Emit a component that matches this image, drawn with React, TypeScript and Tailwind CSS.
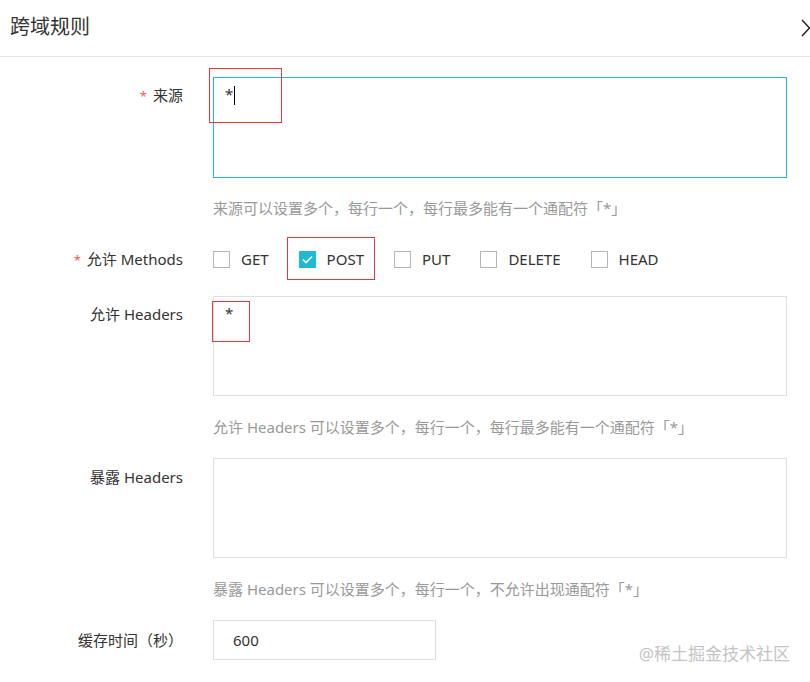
import React from "react";

const methods = [
  { name: "GET", checked: false },
  { name: "POST", checked: true },
  { name: "PUT", checked: false },
  { name: "DELETE", checked: false },
  { name: "HEAD", checked: false },
];

function Label({ text, required }: { text: string; required?: boolean }) {
  return (
    <div className="w-[183px] shrink-0 text-right leading-[20px] text-[#333]">
      {required && <span className="mr-[6px] text-[13px] text-[#f0595a]">*</span>}
      {text}
    </div>
  );
}

function Checkbox({ name, checked }: { name: string; checked: boolean }) {
  return (
    <label className="relative mr-[30px] flex items-center">
      {checked ? (
        <span className="flex h-[17px] w-[17px] items-center justify-center bg-[#1fb8d6]">
          <svg width="11" height="9" viewBox="0 0 11 9">
            <path d="M1 4.5 L4 7.5 L10 1.5" fill="none" stroke="#fff" strokeWidth="1.6" />
          </svg>
        </span>
      ) : (
        <span className="h-[17px] w-[17px] border border-[#b5b5b5] bg-white" />
      )}
      <span className="ml-[11px] text-[#333]">{name}</span>
      {checked && (
        <div className="absolute -left-[12px] -top-[11px] h-[43px] w-[88px] border border-[#e8363b]" />
      )}
    </label>
  );
}

export default function App() {
  return (
    <div className="relative h-[682px] w-[810px] overflow-hidden bg-white font-['Noto_Sans','Noto_Sans_CJK_SC',sans-serif] text-[15px]">
      {/* header */}
      <div className="flex h-[57px] items-center justify-between border-b border-[#e5e5e5] pb-[2px] pl-[10px]">
        <h1 className="text-[20px] text-[#333]">跨域规则</h1>
        <svg width="9" height="18" viewBox="0 0 9 18" className="mt-[1px]">
          <path d="M1 1 L8.5 9 L1 17" fill="none" stroke="#222" strokeWidth="1.5" />
        </svg>
      </div>

      <div className="pt-[20px]">
        {/* 来源 */}
        <div className="flex">
          <div className="pt-[8px]">
            <Label text="来源" required />
          </div>
          <div className="ml-[30px] w-[574px]">
            <div className="relative h-[101px] border border-[#1fb8d6] px-[11px] pt-[6px] leading-[20px] text-[#333]">
              <span>*</span>
              <span className="ml-[1px] inline-block h-[19px] w-px bg-black align-middle" />
              <div className="absolute -left-[5px] -top-[10px] h-[55px] w-[73px] border border-[#e8363b]" />
            </div>
            <p className="mt-[20px] leading-[20px] text-[#999]">
              来源可以设置多个，每行一个，每行最多能有一个通配符「*」
            </p>
          </div>
        </div>

        {/* Methods */}
        <div className="mt-[29px] flex h-[24px] items-center">
          <Label text="允许 Methods" required />
          <div className="ml-[30px] flex items-center">
            {methods.map((m) => (
              <Checkbox key={m.name} name={m.name} checked={m.checked} />
            ))}
          </div>
        </div>

        {/* 允许 Headers */}
        <div className="mt-[25px] flex">
          <div className="pt-[8px]">
            <Label text="允许 Headers" />
          </div>
          <div className="ml-[30px] w-[574px]">
            <div className="relative h-[100px] border border-[#e0e0e0] px-[11px] pt-[6px] leading-[20px] text-[#333]">
              <span>*</span>
              <div className="absolute -left-[2px] top-[4px] h-[41px] w-[38px] border border-[#e8363b]" />
            </div>
            <p className="mt-[21px] leading-[20px] text-[#999]">
              允许 Headers 可以设置多个，每行一个，每行最多能有一个通配符「*」
            </p>
          </div>
        </div>

        {/* 暴露 Headers */}
        <div className="mt-[21px] flex">
          <div className="pt-[9px]">
            <Label text="暴露 Headers" />
          </div>
          <div className="ml-[30px] w-[574px]">
            <div className="h-[100px] border border-[#e0e0e0]" />
            <p className="mt-[21px] leading-[20px] text-[#999]">
              暴露 Headers 可以设置多个，每行一个，不允许出现通配符「*」
            </p>
          </div>
        </div>

        {/* 缓存时间 */}
        <div className="mt-[21px] flex items-center">
          <Label text="缓存时间（秒）" />
          <div className="ml-[30px] flex h-[40px] w-[223px] items-center border border-[#e0e0e0] pl-[19px] text-[#333]">
            600
          </div>
        </div>
      </div>

      <div className="absolute right-[20px] top-[642px] text-[17px] leading-[24px] text-[#c4c4c4]">
        @稀土掘金技术社区
      </div>
    </div>
  );
}
